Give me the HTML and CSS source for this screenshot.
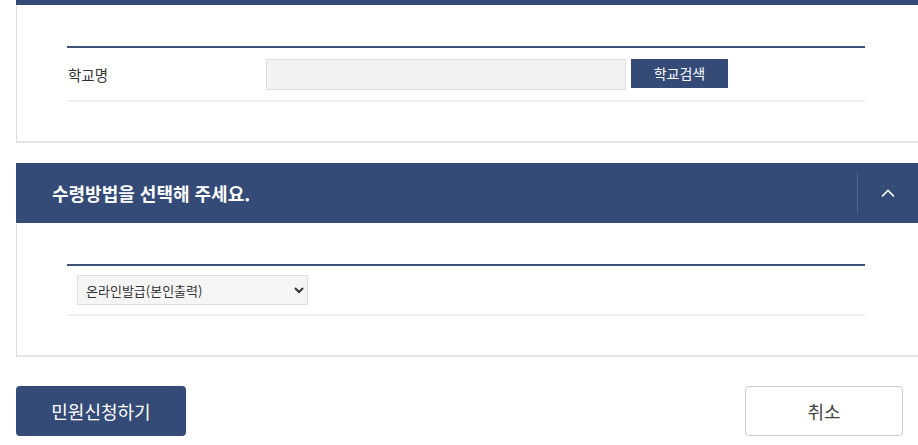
FILE: index.html
```html
<!DOCTYPE html>
<html lang="ko">
<head>
    <meta charset="UTF-8">
    <meta name="viewport" content="width=device-width, initial-scale=1.0">
    <title>민원신청</title>
    <link rel="stylesheet" href="styles.css">
</head>
<body>
  <div class="container">
    <div class="top-bar"></div>

    <div class="panel">
      <div class="form-table">
        <div class="row">
          <div class="th">학교명</div>
          <div class="td">
            <input type="text" class="text-input" aria-label="학교명" readonly>
            <button type="button" class="btn-search">학교검색</button>
          </div>
        </div>
      </div>
    </div>

    <div class="section">
      <div class="section-head">
        <h3>수령방법을 선택해 주세요.</h3>
        <button type="button" class="toggle" aria-label="접기">
          <svg width="16" height="10" viewBox="0 0 16 10"><path d="M2 8.5 L8 2.5 L14 8.5" fill="none" stroke="#fff" stroke-width="1.6"/></svg>
        </button>
      </div>
      <div class="panel">
        <div class="form-table">
          <div class="row row-select">
            <select class="select" aria-label="수령방법">
              <option>온라인발급(본인출력)</option>
              <option>우편수령</option>
            </select>
          </div>
        </div>
      </div>
    </div>

    <div class="actions">
      <button type="button" class="btn-primary">민원신청하기</button>
      <button type="button" class="btn-cancel">취소</button>
    </div>
  </div>
</body>
</html>
```

FILE: styles.css
```css
body {
  margin: 0;
  font-family: "Noto Sans CJK KR", "Noto Sans", sans-serif;
  color: #333;
  background-color: #fff;
}

.container {
  padding-left: 16px;
}

.top-bar {
  height: 5px;
  background-color: #344b78;
}

.panel {
  border-left: 1px solid #ddd;
  border-bottom: 2px solid #e6e6e6;
  padding: 41px 53px 39px 50px;
}

.form-table {
  border-top: 2px solid #3d4f75;
}

.row {
  display: flex;
  align-items: center;
  height: 52px;
  border-bottom: 2px solid #f0f0f0;
}

.th {
  width: 199px;
  font-size: 14.5px;
  padding-left: 1px;
  box-sizing: border-box;
}

.td {
  display: flex;
  align-items: flex-start;
  height: 31px;
}

.text-input {
  width: 360px;
  height: 31px;
  box-sizing: border-box;
  background-color: #f2f2f2;
  border: 1px solid #dedede;
  margin: 0;
}

.btn-search {
  margin-left: 5px;
  width: 97px;
  height: 29px;
  background-color: #344b78;
  color: #fff;
  border: none;
  font-family: inherit;
  font-size: 14px;
  padding: 0;
  cursor: pointer;
}

.section {
  margin-top: 20px;
}

.section-head {
  display: flex;
  align-items: center;
  justify-content: space-between;
  height: 60px;
  background-color: #344b78;
  padding-left: 36px;
}

.section-head h3 {
  margin: 0;
  color: #fff;
  font-size: 18px;
  font-weight: bold;
}

.toggle {
  width: 61px;
  height: 40px;
  background: none;
  border: none;
  border-left: 1px solid rgba(255, 255, 255, 0.15);
  padding: 0;
  display: flex;
  align-items: center;
  justify-content: center;
  cursor: pointer;
}

.row-select {
  height: 48px;
}

.select {
  margin-left: 10px;
  width: 231px;
  height: 30px;
  background-color: #f5f5f5;
  border: 1px solid #e0e0e0;
  font-family: inherit;
  font-size: 13px;
  color: #333;
  padding: 0 4px;
}

.actions {
  display: flex;
  justify-content: space-between;
  margin-top: 29px;
  padding-right: 15px;
}

.btn-primary,
.btn-cancel {
  height: 50px;
  border-radius: 4px;
  font-family: inherit;
  font-size: 18px;
  cursor: pointer;
}

.btn-primary {
  width: 170px;
  background-color: #344b78;
  color: #fff;
  border: none;
}

.btn-cancel {
  width: 158px;
  background-color: #fff;
  color: #444;
  border: 1px solid #ccc;
}
```
